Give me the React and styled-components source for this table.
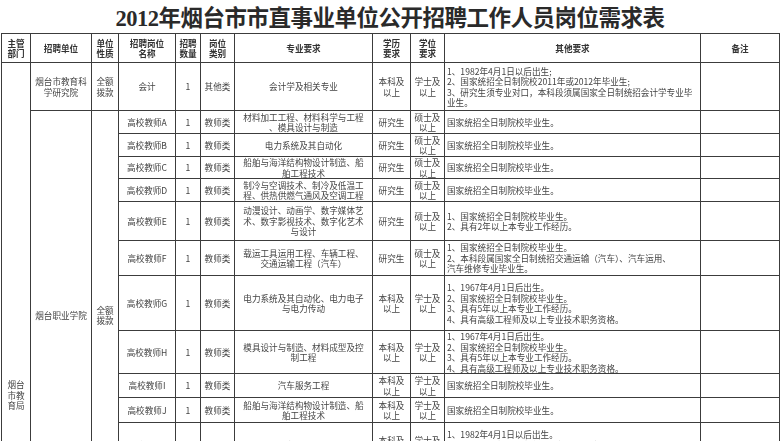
import React from 'react';
import styled, { createGlobalStyle } from 'styled-components';

const GlobalStyle = createGlobalStyle`
    body {
        margin: 0;
        background: #fff;
        font-family: "Noto Sans CJK SC", "Liberation Sans", sans-serif;
        color: #3a3a3a;
    }
`

const cols = [29, 61, 27, 57, 25, 34, 138, 38, 34, 256, 79];

const headers = [
    ['主管', '部门'],
    ['招聘单位'],
    ['单位', '性质'],
    ['招聘岗位', '名称'],
    ['招聘', '数量'],
    ['岗位', '类别'],
    ['专业要求'],
    ['学历', '要求'],
    ['学位', '要求'],
    ['其他要求'],
    ['备注']
];

const teacherRows = [
    { h: 23, name: '高校教师A', major: ['材料加工工程、材料科学与工程', '、模具设计与制造'], edu: '研究生', degree: ['硕士及', '以上'], other: ['国家统招全日制院校毕业生。'] },
    { h: 23, name: '高校教师B', major: ['电力系统及其自动化'], edu: '研究生', degree: ['硕士及', '以上'], other: ['国家统招全日制院校毕业生。'] },
    { h: 22, name: '高校教师C', major: ['船舶与海洋结构物设计制造、船', '舶工程技术'], edu: '研究生', degree: ['硕士及', '以上'], other: ['国家统招全日制院校毕业生。'] },
    { h: 23, name: '高校教师D', major: ['制冷与空调技术、制冷及低温工', '程、供热供燃气通风及空调工程'], edu: '研究生', degree: ['硕士及', '以上'], other: ['国家统招全日制院校毕业生。'] },
    { h: 39, name: '高校教师E', major: ['动漫设计、动画学、数字媒体艺', '术、数字影视技术、数字化艺术', '与设计'], edu: '研究生', degree: ['硕士及', '以上'], other: ['1、国家统招全日制院校毕业生。', '2、具有2年以上本专业工作经历。'] },
    { h: 35, name: '高校教师F', major: ['载运工具运用工程、车辆工程、', '交通运输工程（汽车）'], edu: '研究生', degree: ['硕士及', '以上'], other: ['1、国家统招全日制院校毕业生。', '2、本科段属国家全日制统招交通运输（汽车）、汽车运用、', '汽车维修专业毕业生。'] },
    { h: 55, name: '高校教师G', major: ['电力系统及其自动化、电力电子', '与电力传动'], edu: ['本科及', '以上'], degree: ['学士及', '以上'], other: ['1、1967年4月1日后出生。', '2、国家统招全日制院校毕业生。', '3、具有5年以上本专业工作经历。', '4、具有高级工程师及以上专业技术职务资格。'] },
    { h: 40, name: '高校教师H', major: ['模具设计与制造、材料成型及控', '制工程'], edu: ['本科及', '以上'], degree: ['学士及', '以上'], other: ['1、1967年4月1日后出生。', '2、国家统招全日制院校毕业生。', '3、具有5年以上本专业工作经历。', '4、具有高级工程师及以上专业技术职务资格。'] },
    { h: 24, name: '高校教师I', major: ['汽车服务工程'], edu: ['本科及', '以上'], degree: ['学士及', '以上'], other: ['国家统招全日制院校毕业生。'] },
    { h: 25, name: '高校教师J', major: ['船舶与海洋结构物设计制造、船', '舶工程技术'], edu: ['本科及', '以上'], degree: ['学士及', '以上'], other: ['国家统招全日制院校毕业生。'] },
    { h: 45, name: '高校教师K', major: ['汽车运用工程'], edu: ['本科及', '以上'], degree: ['学士及', '以上'], other: ['1、1982年4月1日以后出生。', '2、国家统招全日制院校2011年或2012年毕业生。', '3、具有相关专业工作经历。'] },
    { h: 52, name: '高校教师L', major: ['会计学、财务管理'], edu: ['本科及', '以上'], degree: ['学士及', '以上'], other: ['1、1982年4月1日以后出生。', '2、国家统招全日制院校2011年或2012年毕业生。'] }
];

const laterRows = [
    { h: 52, name: '教研员', major: ['汉语言文学'], edu: ['本科及', '以上'], degree: ['学士及', '以上'], other: ['1、1977年4月1日以后出生。', '2、国家统招全日制院校毕业生。'] },
    { h: 52, name: '教研员', major: ['数学与应用数学'], edu: ['本科及', '以上'], degree: ['学士及', '以上'], other: ['1、1977年4月1日以后出生。', '2、国家统招全日制院校毕业生。'] },
    { h: 52, name: '教研员', major: ['英语'], edu: ['本科及', '以上'], degree: ['学士及', '以上'], other: ['1、1977年4月1日以后出生。', '2、国家统招全日制院校毕业生。'] },
    { h: 52, name: '教研员', major: ['物理学'], edu: ['本科及', '以上'], degree: ['学士及', '以上'], other: ['1、1977年4月1日以后出生。', '2、国家统招全日制院校毕业生。'] }
];

const Lines = ({ lines }) => {
    const list = Array.isArray(lines) ? lines : [lines];
    return list.map((line, i) => <Line key={i}>{line}</Line>);
}

const PostRow = ({ row, lead }) => (
    <Row $h={row.h}>
        {lead}
        <Cell><Lines lines={row.name} /></Cell>
        <Cell>1</Cell>
        <Cell>教师类</Cell>
        <Cell><Lines lines={row.major} /></Cell>
        <Cell><Lines lines={row.edu} /></Cell>
        <Cell><Lines lines={row.degree} /></Cell>
        <Cell $align="left"><Lines lines={row.other} /></Cell>
        <Cell></Cell>
    </Row>
)

const App = () => {
    const totalRows = 1 + teacherRows.length + laterRows.length;
    return (
        <Page>
            <GlobalStyle />
            <Title>2012年烟台市市直事业单位公开招聘工作人员岗位需求表</Title>
            <Table>
                <colgroup>
                    {cols.map((w, i) => <col key={i} style={{ width: w }} />)}
                </colgroup>
                <tbody>
                    <Row $h={29}>
                        {headers.map((h, i) => (
                            <HeadCell key={i}><Lines lines={h} /></HeadCell>
                        ))}
                    </Row>
                    <Row $h={48}>
                        <Cell rowSpan={totalRows}><Lines lines={['烟台', '市教', '育局']} /></Cell>
                        <Cell><Lines lines={['烟台市教育科', '学研究院']} /></Cell>
                        <Cell><Lines lines={['全额', '拨款']} /></Cell>
                        <Cell>会计</Cell>
                        <Cell>1</Cell>
                        <Cell>其他类</Cell>
                        <Cell>会计学及相关专业</Cell>
                        <Cell><Lines lines={['本科及', '以上']} /></Cell>
                        <Cell><Lines lines={['学士及', '以上']} /></Cell>
                        <Cell $align="left">
                            <Lines lines={[
                                '1、1982年4月1日以后出生;',
                                '2、国家统招全日制院校2011年或2012年毕业生;',
                                '3、研究生须专业对口，本科段须属国家全日制统招会计学专业毕',
                                '业生。'
                            ]} />
                        </Cell>
                        <Cell></Cell>
                    </Row>
                    {teacherRows.map((row, i) => (
                        <PostRow
                            key={row.name}
                            row={row}
                            lead={i === 0 ? (
                                <>
                                    <Cell rowSpan={teacherRows.length}>烟台职业学院</Cell>
                                    <Cell rowSpan={teacherRows.length}><Lines lines={['全额', '拨款']} /></Cell>
                                </>
                            ) : null}
                        />
                    ))}
                    {laterRows.map((row, i) => (
                        <PostRow
                            key={i}
                            row={row}
                            lead={i === 0 ? (
                                <>
                                    <Cell rowSpan={laterRows.length}><Lines lines={['烟台市教育', '教学研究室']} /></Cell>
                                    <Cell rowSpan={laterRows.length}><Lines lines={['全额', '拨款']} /></Cell>
                                </>
                            ) : null}
                        />
                    ))}
                </tbody>
            </Table>
        </Page>
    )
}

const Page = styled.div`
    width: 780px;
`

const Title = styled.h1`
    height: 33px;
    margin: 0;
    display: flex;
    align-items: center;
    justify-content: center;
    padding-bottom: 2px;
    box-sizing: border-box;
    font-family: "Liberation Serif", "Noto Sans CJK SC", serif;
    font-size: 22.5px;
    font-weight: 700;
    letter-spacing: -0.5px;
    color: #2a2a2a;
`

const Table = styled.table`
    width: 778px;
    margin-left: 1px;
    table-layout: fixed;
    border-collapse: collapse;
    filter: blur(0.25px);
`

const Row = styled.tr`
    height: ${props => props.$h}px;
`

const Cell = styled.td`
    border: 1px solid #3c3c3c;
    padding: 0 2px;
    font-size: 8.6px;
    line-height: 10.5px;
    text-align: ${props => props.$align || 'center'};
    vertical-align: middle;
    overflow: hidden;
    white-space: nowrap;
    color: #444;
`

const HeadCell = styled(Cell)`
    font-weight: 700;
    color: #333;
`

const Line = styled.div`
    white-space: nowrap;
`

export default App;
